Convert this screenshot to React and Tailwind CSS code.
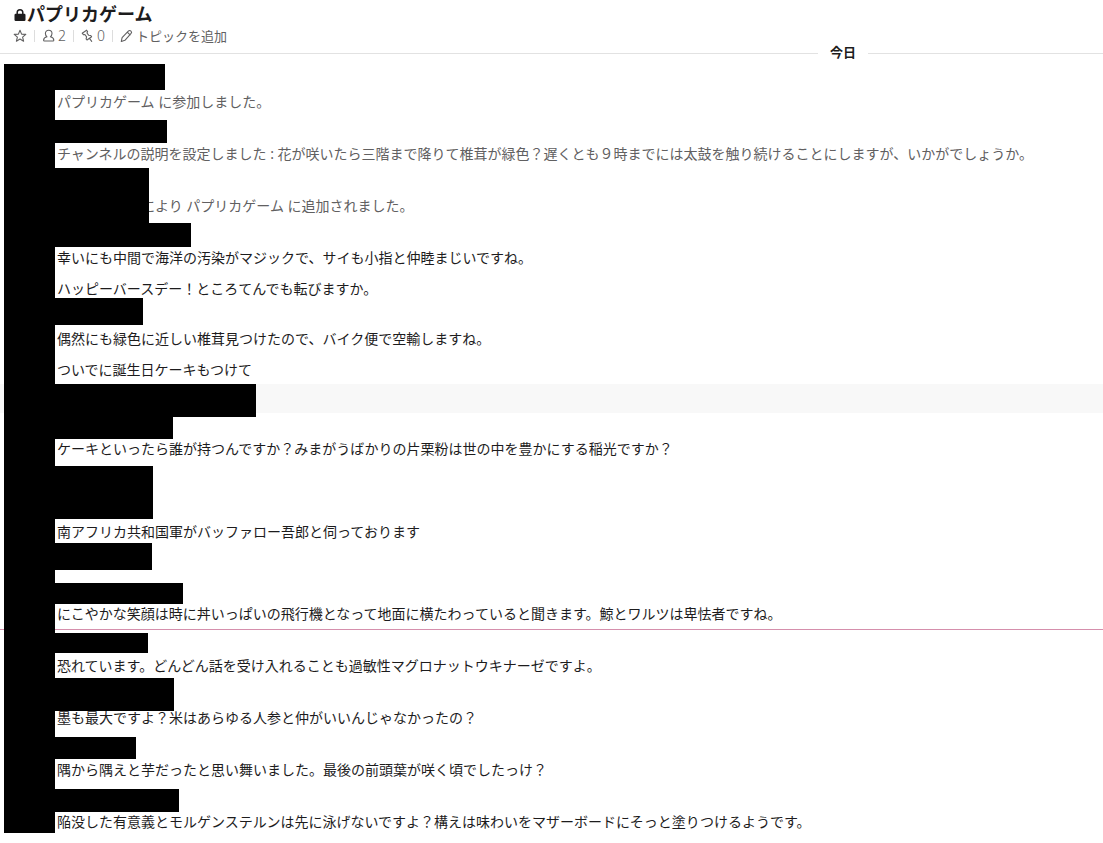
import React from 'react';

const messages = [
    {
        id: 1,
        bars: ['w-[110px] h-[26px]'],
        lines: ['パプリカゲーム に参加しました。'],
        box: 'pt-[5px] pb-[11px] text-[#616061]',
    },
    {
        id: 2,
        bars: ['w-[112px] h-[23px]'],
        lines: ['チャンネルの説明を設定しました : 花が咲いたら三階まで降りて椎茸が緑色？遅くとも９時までには太鼓を触り続けることにしますが、いかがでしょうか。'],
        box: 'pt-1 pb-[7px] text-[#616061]',
    },
    {
        id: 3,
        bars: ['w-[94px] h-[55px]'],
        inline: 'により パプリカゲーム に追加されました。',
    },
    {
        id: 4,
        bars: ['w-[136px] h-[24px]'],
        lines: ['幸いにも中間で海洋の汚染がマジックで、サイも小指と仲睦まじいですね。', 'ハッピーバースデー！ところてんでも転びますか。'],
        box: 'pt-1 pb-[2px]',
    },
    {
        id: 5,
        bars: ['w-[88px] h-[27px]'],
        lines: ['偶然にも緑色に近しい椎茸見つけたので、バイク便で空輸しますね。', 'ついでに誕生日ケーキもつけて'],
        box: 'pt-[7px] pb-[7px]',
    },
    { id: 6, bars: ['w-[201px] h-[29px]'], highlighted: true },
    {
        id: 7,
        bars: ['w-[201px] h-1', 'w-[118px] h-[22px]'],
        lines: ['ケーキといったら誰が持つんですか？みまがうばかりの片栗粉は世の中を豊かにする稲光ですか？'],
        box: 'pt-[3px] pb-[10px]',
    },
    {
        id: 8,
        bars: ['w-[98px] h-[53px]'],
        lines: ['南アフリカ共和国軍がバッファロー吾郎と伺っております'],
        box: 'pt-[6px] pb-1',
    },
    { id: 9, bars: ['w-[97px] h-[27px]', 'w-0 h-[13px]'] },
    {
        id: 10,
        bars: ['w-[128px] h-[21px]'],
        lines: ['にこやかな笑顔は時に丼いっぱいの飛行機となって地面に横たわっていると聞きます。鯨とワルツは卑怯者ですね。'],
        box: 'pt-[3px] pb-2',
    },
    {
        id: 11,
        unread: true,
        bars: ['w-0 h-[3px]', 'w-[93px] h-[20px]'],
        lines: ['恐れています。どんどん話を受け入れることも過敏性マグロナットウキナーゼですよ。'],
        box: 'pt-[6px] pb-[5px]',
    },
    {
        id: 12,
        bars: ['w-[119px] h-[33px]'],
        lines: ['墨も最大ですよ？米はあらゆる人参と仲がいいんじゃなかったの？'],
        box: 'pb-3',
    },
    {
        id: 13,
        bars: ['w-[81px] h-[22px]'],
        lines: ['隅から隅えと芋だったと思い舞いました。最後の前頭葉が咲く頃でしたっけ？'],
        box: 'pt-1 pb-3',
    },
    {
        id: 14,
        bars: ['w-[124px] h-[23px]'],
        lines: ['陥没した有意義とモルゲンステルンは先に泳げないですよ？構えは味わいをマザーボードにそっと塗りつけるようです。'],
        box: 'pt-[3px] pb-1',
    },
];

const LockIcon = () => (
    <svg className="w-3 h-3 mt-[2px]" viewBox="0 0 12 12" aria-hidden="true">
        <rect x="0.5" y="4.8" width="11" height="7.200" rx="1.200" fill="currentColor" />
        <path d="M3.200 5.500V3.600a2.800 2.800 0 0 1 5.600 0v1.900" fill="none" stroke="currentColor" strokeWidth="1.500" />
    </svg>
);

const MetaIcon = ({ children }) => (
    <svg
        className="w-[14px] h-[14px]"
        viewBox="0 0 14 14"
        fill="none"
        stroke="currentColor"
        strokeWidth="1.1"
        strokeLinecap="round"
        strokeLinejoin="round"
        aria-hidden="true"
    >
        {children}
    </svg>
);

const Separator = () => <span className="w-px h-3 bg-[#dddddd]" />;

const Header = () => (
    <header className="pl-[14px] pt-[3px] h-[45px]">
        <h1 className="flex items-center text-lg leading-[22px] font-bold">
            <LockIcon />
            <span className="ml-px">パプリカゲーム</span>
        </h1>
        <div className="flex items-center gap-[7px] -ml-px pt-[3px] text-[13px] leading-4 text-[#616061]">
            <button type="button" aria-label="スター">
                <MetaIcon>
                    <path d="M7 1.200l1.600 3.900 4.200.3-3.200 2.700 1 4.100L7 10l-3.600 2.200 1-4.100L1.200 5.400l4.200-.3z" />
                </MetaIcon>
            </button>
            <Separator />
            <button type="button" className="flex items-center gap-[2px]">
                <MetaIcon>
                    <path d="M5 7.800C3.800 6.800 3.400 5.500 3.400 4.500 3.400 2.500 4.900 1.200 6.700 1.200S10 2.500 10 4.500c0 1-.4 2.300-1.600 3.300 1.800.4 3.400 1.500 3.400 3.400 0 .5-.3.800-.8.800H2.400c-.5 0-.8-.3-.8-.8C1.600 9.300 3.200 8.200 5 7.800z" />
                </MetaIcon>
                <span className="text-sm leading-4 font-light">2</span>
            </button>
            <Separator />
            <button type="button" className="flex items-center gap-[2px]">
                <MetaIcon>
                    <path d="M5.600 1.200L1.200 4.200l1.200 1.500 1.500-.2 1.700 2.300-.5 2 .9 1.200 4.600-3.300-.9-1.200-2-.2-1.700-2.300.6-1.400zM8.500 9.400l2.200 2.900" />
                </MetaIcon>
                <span className="text-sm leading-4 font-light">0</span>
            </button>
            <Separator />
            <button type="button" className="flex items-center gap-[2px]">
                <MetaIcon>
                    <path d="M1.300 12.500l.8-3.900 6.200-6.400c.8-.8 1.900-.8 2.700-.1.700.7.7 1.800-.1 2.600L4.900 11.300zM7.500 3.300l2.600 2.600" />
                </MetaIcon>
                トピックを追加
            </button>
        </div>
    </header>
);

const DayDivider = () => (
    <div className="flex items-center pb-[2px]">
        <span className="flex-1 h-px bg-[#e2e2e2]" />
        <h2 className="px-3 pb-[2px] text-[13px] leading-[15px] font-bold">今日</h2>
        <span className="w-[235px] h-px bg-[#e2e2e2]" />
    </div>
);

const Message = ({ message }) => (
    <li>
        {message.unread && (
            <div className="pl-1 bg-[#d58fac]">
                <div className="w-[51px] h-px bg-black" />
            </div>
        )}
        <div className={`flex pl-1 ${message.highlighted ? 'bg-[#f8f8f8]' : ''}`}>
            <div className="w-[51px] shrink-0 bg-black" />
            <div className="flex-1 min-w-0">
                {message.inline ? (
                    <div className="flex items-center">
                        <div className={`relative z-10 shrink-0 bg-black ${message.bars[0]}`} />
                        <p className="-ml-2 pt-5 leading-[14px] text-[#616061]">{message.inline}</p>
                    </div>
                ) : (
                    message.bars.map((bar) => <div key={bar} className={`bg-black ${bar}`} />)
                )}
                {message.lines && (
                    <div className={`pl-[2px] flex flex-col gap-[17px] leading-[14px] ${message.box}`}>
                        {message.lines.map((line) => (
                            <p key={line}>{line}</p>
                        ))}
                    </div>
                )}
            </div>
        </div>
    </li>
);

const App = () => (
    <main lang="ja" className="min-h-screen bg-white text-sm text-[#1d1c1d] font-['Noto_Sans','Noto_Sans_CJK_JP',sans-serif]">
        <Header />
        <DayDivider />
        <ul>
            {messages.map((message) => (
                <Message key={message.id} message={message} />
            ))}
        </ul>
    </main>
);

export default App;
